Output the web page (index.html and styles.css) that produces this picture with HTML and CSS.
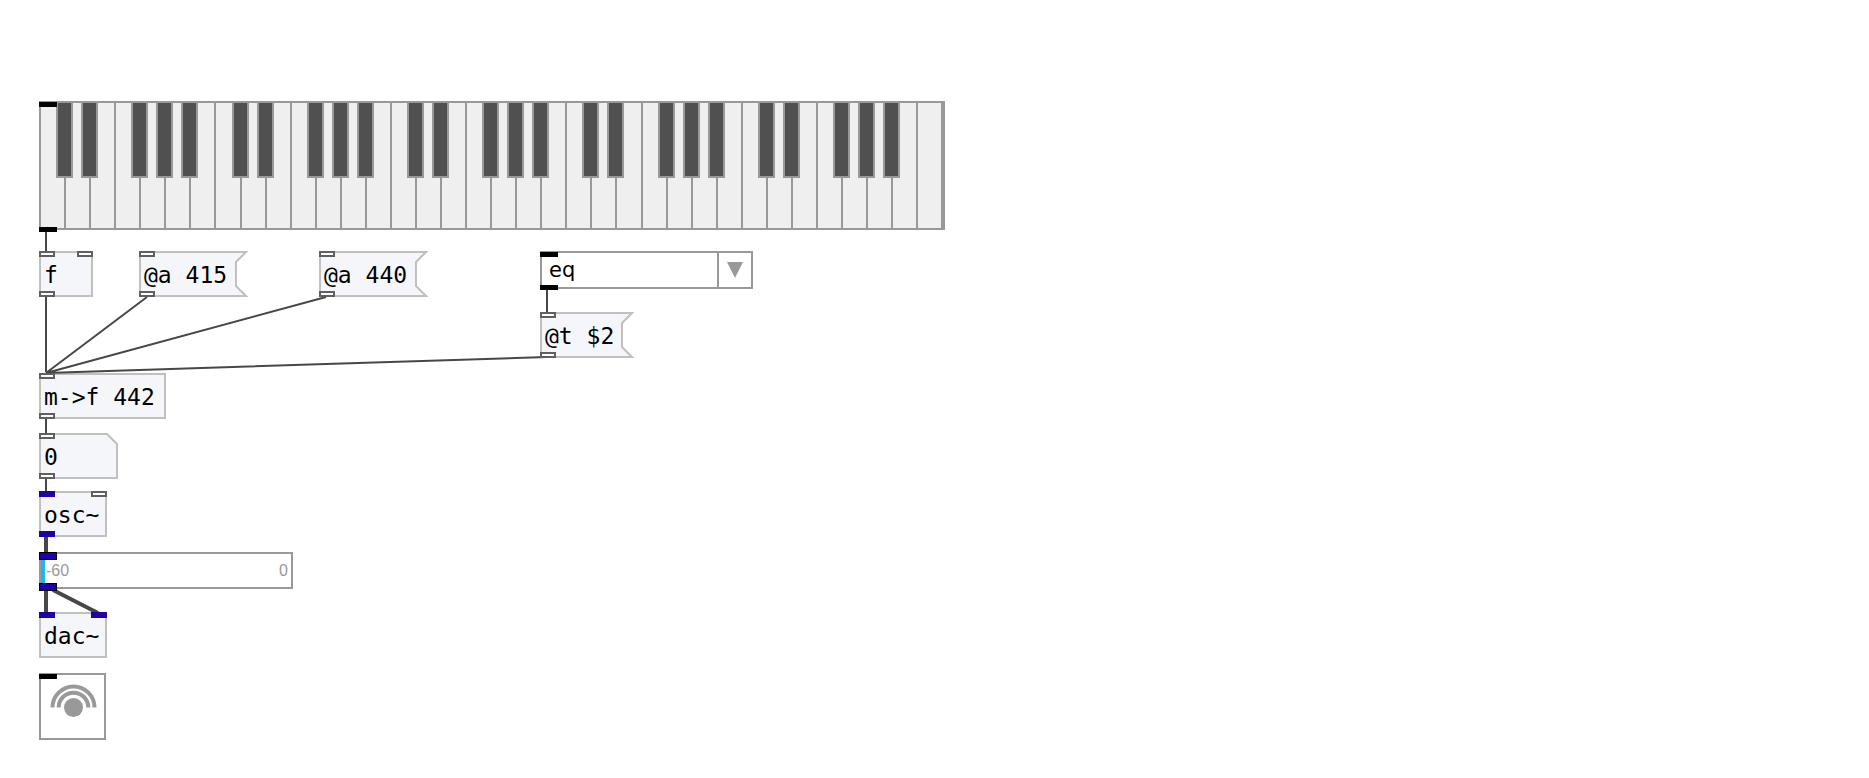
FILE: index.html
```html
<!DOCTYPE html>
<html lang="en">
<head>
<meta charset="utf-8">
<title>Tuning patch</title>
<link rel="stylesheet" href="styles.css">
</head>
<body>
<main class="patch">
  <div class="node keyboard" role="group" aria-label="Keyboard"></div>
  <i class="port ui kb-in"></i>
  <i class="port ui kb-out"></i>

  <div class="node box float">f<i class="port in"></i><i class="port in right"></i><i class="port out"></i></div>

  <button class="node message msg-415" type="button">
    <svg class="shape" width="109" height="46" aria-hidden="true"><path d="M1 1H107L97 11V35L107 45H1Z"/></svg>
    <span class="label">@a 415</span><i class="port in"></i><i class="port out"></i>
  </button>

  <button class="node message msg-440" type="button">
    <svg class="shape" width="109" height="46" aria-hidden="true"><path d="M1 1H107L97 11V35L107 45H1Z"/></svg>
    <span class="label">@a 440</span><i class="port in"></i><i class="port out"></i>
  </button>

  <div class="node menu">
    <select class="choice" aria-label="Temperament"><option>eq</option></select>
    <span class="arrow"><svg width="16" height="16" aria-hidden="true"><path d="M0 0H16L8 16Z"/></svg></span>
  </div>
  <i class="port ui menu-in"></i>
  <i class="port ui menu-out"></i>

  <button class="node message msg-t" type="button">
    <svg class="shape" width="94" height="46" aria-hidden="true"><path d="M1 1H92L82 11V35L92 45H1Z"/></svg>
    <span class="label">@t $2</span><i class="port in"></i><i class="port out"></i>
  </button>

  <div class="node box mtof">m-&gt;f 442<i class="port in"></i><i class="port out"></i></div>

  <div class="node number">
    <svg class="shape" width="79" height="46" aria-hidden="true"><path d="M1 1H68L78 11V45H1Z"/></svg>
    <input class="value" type="text" value="0" aria-label="Frequency"><i class="port in"></i><i class="port out"></i>
  </div>

  <div class="node box osc">osc~<i class="port in signal"></i><i class="port in right"></i><i class="port out signal"></i></div>

  <div class="node gain">
    <input class="range" type="range" min="-60" max="0" value="-60" aria-label="Gain">
    <span class="mark">-60</span><span class="mark">0</span>
  </div>
  <i class="port ui signal gain-in"></i>
  <i class="port ui signal gain-out"></i>

  <div class="node box dac">dac~<i class="port in signal"></i><i class="port in right signal"></i></div>

  <button class="node dsp" type="button" aria-label="Audio on or off">
    <svg width="50" height="50" viewBox="0 0 50 50" aria-hidden="true">
      <circle cx="25.5" cy="25.5" r="9.5"/>
      <path d="M10.7 25.5A14.8 14.8 0 0 1 40.3 25.5M4.5 25.5A21 21 0 0 1 46.5 25.5"/>
    </svg>
  </button>
  <i class="port ui dsp-in"></i>

  <svg class="wires" aria-hidden="true">
    <path d="M46 232V251M46 297V372M147 297L46 373M326 297L46 373M547 357L46 373M547 289V312M46 418V433M46 479V491"/>
    <path class="audio" d="M46 537V552M46 591V612M53 590L98 613"/>
  </svg>
</main>
<script src="keyboard.js"></script>
</body>
</html>
```

FILE: styles.css
```css
* {
  box-sizing: border-box;
}

body {
  margin: 0;
  background: #fff;
  color: #000;
  font-family: "DejaVu Sans Mono", monospace;
  font-size: 23px;
}

button,
input,
select {
  margin: 0;
  padding: 0;
  border: 0;
  border-radius: 0;
  background: none;
  color: inherit;
  font: inherit;
  appearance: none;
}

.patch {
  position: relative;
  min-height: 100vh;
}

/* Nodes of the patch, placed freely on the canvas */
.node {
  position: absolute;
  left: 39px;
}

.box {
  height: 46px;
  padding: 0 3px;
  border: 2px solid #c0c0c0;
  background: #f5f6f9;
  line-height: 44px;
  white-space: nowrap;
}

.float { top: 251px; width: 54px; }
.mtof { top: 373px; width: 127px; }
.osc { top: 491px; width: 68px; }
.dac { top: 612px; width: 68px; }

.message,
.number {
  display: flex;
  height: 46px;
  padding: 0 5px;
  line-height: 48px;
  text-align: left;
}

.msg-415 { left: 139px; top: 251px; width: 109px; }
.msg-440 { left: 319px; top: 251px; width: 109px; }
.msg-t { left: 540px; top: 312px; width: 94px; }
.number { top: 433px; width: 79px; }

.shape {
  position: absolute;
  left: 0;
  top: 0;
}

.shape path {
  fill: #f5f6f9;
  stroke: #c0c0c0;
  stroke-width: 2;
}

.label,
.value {
  position: relative;
  white-space: pre;
}

.value {
  width: 100%;
  height: 48px;
}

/* Inlets and outlets */
.port {
  position: absolute;
  z-index: 2;
  width: 16px;
  height: 6px;
  border: 2px solid #606060;
  background: #fff;
}

.port.in { left: 0; top: 0; }
.port.out { left: 0; bottom: 0; }
.port.right { left: auto; right: 0; }
.box .port.in { left: -2px; top: -2px; }
.box .port.out { left: -2px; bottom: -2px; }
.box .port.right { left: auto; right: -2px; }

.port.signal {
  border-color: #2200a8;
  background: #2200a8;
}

.port.ui {
  left: 39px;
  width: 18px;
  height: 5px;
  border: 0;
  background: #000;
}

.port.ui.signal {
  height: 8px;
  border: 1px solid #000;
  background: #2200a8;
}

.port.kb-in { top: 102px; }
.port.kb-out { top: 227px; }
.port.menu-in { left: 540px; top: 252px; }
.port.menu-out { left: 540px; top: 285px; }
.port.gain-in { top: 552px; }
.port.gain-out { top: 583px; }
.port.dsp-in { top: 674px; }

/* Piano keyboard */
.keyboard {
  display: flex;
  top: 101px;
  width: 906px;
  height: 129px;
  border: solid #999;
  border-width: 2px 4px 2px 0;
}

.slot {
  position: relative;
  display: flex;
  flex: 1;
}

.white {
  flex: 1;
  border-left: 2px solid #999;
  background: #efefef;
}

.black {
  position: absolute;
  z-index: 1;
  top: 0;
  right: -9px;
  width: 17px;
  height: 75px;
  border: solid #999;
  border-width: 0 2px 2px;
  background: #505050;
}

/* Menu */
.menu {
  display: flex;
  left: 540px;
  top: 251px;
  width: 213px;
  height: 38px;
  border: 2px solid #999;
}

.choice {
  flex: 1;
  padding: 0 7px;
  font-family: "DejaVu Sans", sans-serif;
  font-size: 21px;
}

.arrow {
  display: flex;
  align-items: center;
  justify-content: center;
  width: 34px;
  border-left: 2px solid #999;
}

.arrow path {
  fill: #999;
}

/* Gain slider */
.gain {
  display: flex;
  top: 552px;
  align-items: center;
  justify-content: space-between;
  width: 254px;
  height: 37px;
  padding: 0 3px 0 5px;
  border: 2px solid #999;
  color: #999;
  font-family: "Liberation Sans", sans-serif;
  font-size: 16px;
}

.range {
  position: absolute;
  left: 0;
  top: 0;
  width: 100%;
  height: 100%;
}

.range::-webkit-slider-thumb {
  width: 4px;
  height: 33px;
  background: #1cb8ec;
  appearance: none;
}

.mark {
  pointer-events: none;
}

/* Audio switch */
.dsp {
  display: flex;
  top: 673px;
  align-items: center;
  justify-content: center;
  width: 67px;
  height: 67px;
  border: 2px solid #999;
}

.dsp circle {
  fill: #999;
}

.dsp path {
  fill: none;
  stroke: #999;
  stroke-width: 4;
}

/* Connections */
.wires {
  position: absolute;
  left: 0;
  top: 0;
  width: 100%;
  height: 100%;
  pointer-events: none;
}

.wires path {
  fill: none;
  stroke: #474747;
  stroke-width: 2;
}

.wires .audio {
  stroke-width: 4;
}
```

FILE: keyboard.js
```js
const keyboard = document.querySelector(".keyboard");
const names = ["C", "D", "E", "F", "G", "A", "B"];

function addKey(slot, kind, name) {
  const key = document.createElement("button");
  key.type = "button";
  key.className = kind;
  key.setAttribute("aria-label", name);
  slot.append(key);
}

for (let i = 0; i < 36; i++) {
  const name = names[i % 7];
  const octave = 2 + Math.floor(i / 7);
  const slot = document.createElement("span");
  slot.className = "slot";
  addKey(slot, "white", name + octave);
  if (i < 35 && name !== "E" && name !== "B") {
    addKey(slot, "black", name + "#" + octave);
  }
  keyboard.append(slot);
}
```
